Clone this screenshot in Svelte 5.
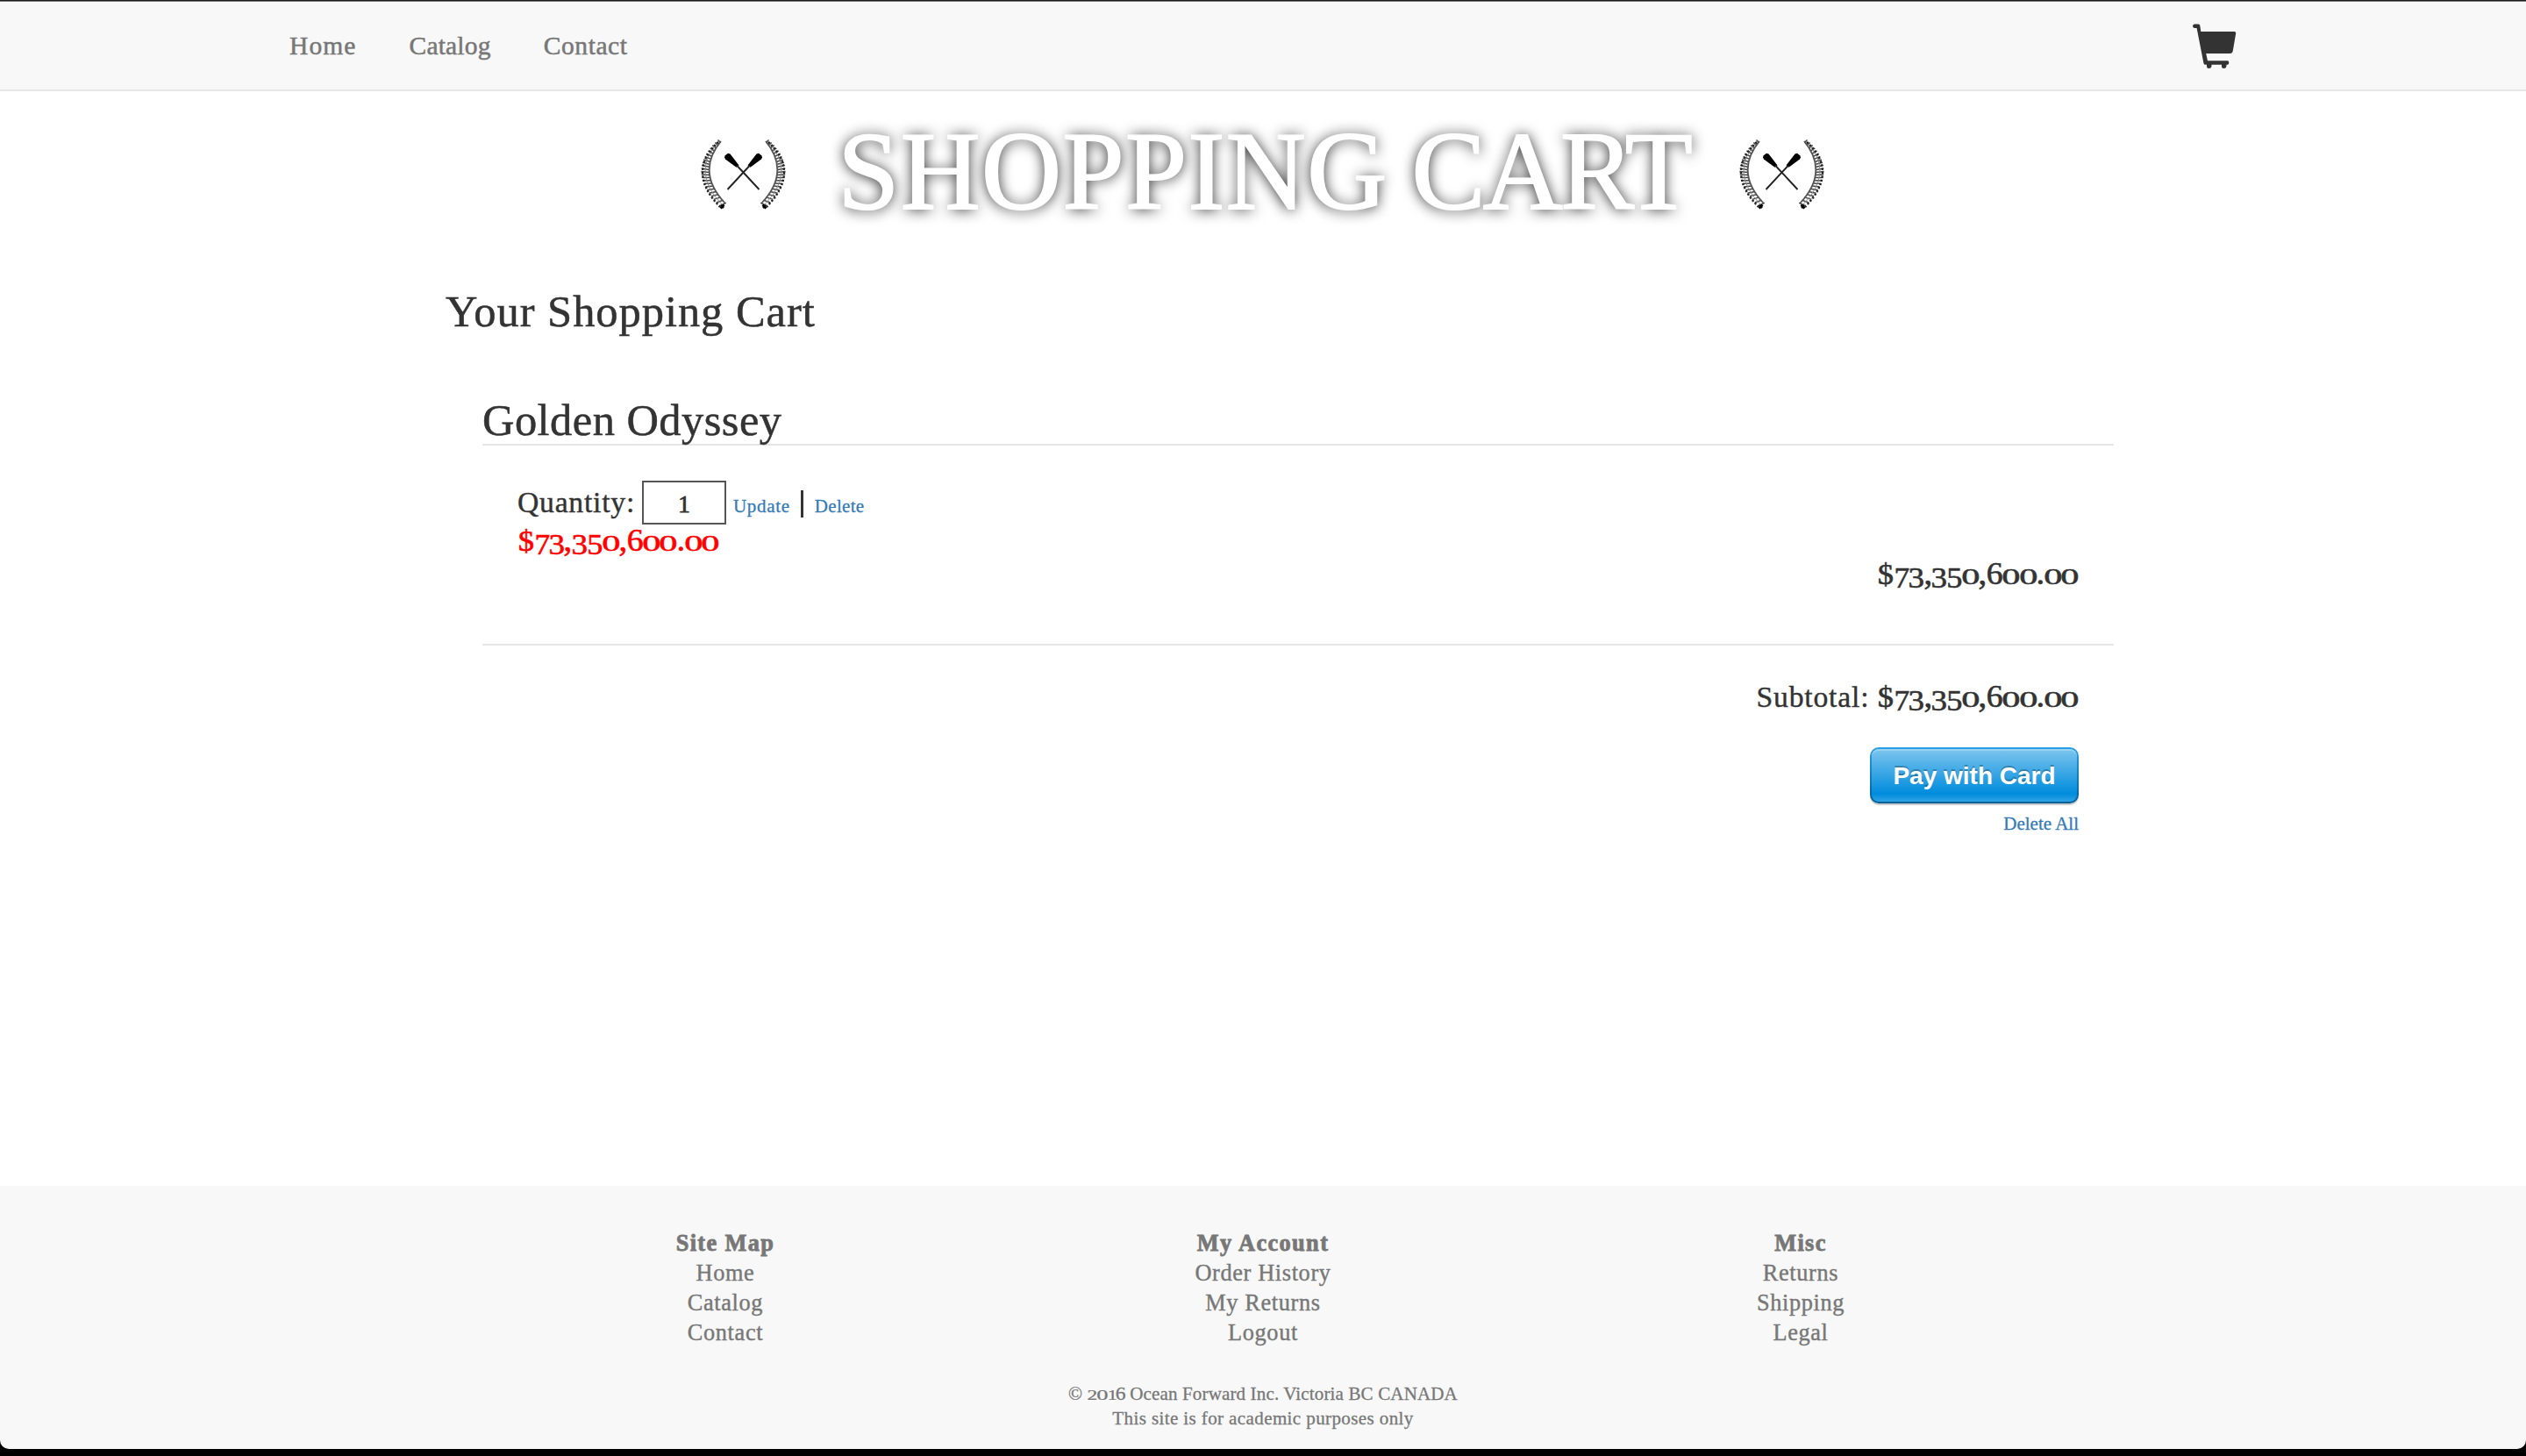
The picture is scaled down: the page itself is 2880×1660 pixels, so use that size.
<script>
  const navItems = [
    { label: 'Home', cls: 'w-home' },
    { label: 'Catalog', cls: 'w-catalog' },
    { label: 'Contact', cls: 'w-contact' }
  ];

  const columns = [
    { title: 'Site Map', links: ['Home', 'Catalog', 'Contact'] },
    { title: 'My Account', links: ['Order History', 'My Returns', 'Logout'] },
    { title: 'Misc', links: ['Returns', 'Shipping', 'Legal'] }
  ];

  // Leaves of the laurel branch, placed along a quadratic curve.
  function laurel() {
    const p0 = [22, 3], p1 = [-12, 37], p2 = [26, 75];
    const n = 22;
    let d = '';
    for (let i = 0; i <= n; i++) {
      const t = i / n;
      const u = 1 - t;
      const x = u * u * p0[0] + 2 * u * t * p1[0] + t * t * p2[0];
      const y = u * u * p0[1] + 2 * u * t * p1[1] + t * t * p2[1];
      const r = 1.6 + 3 * Math.min(1, t * 2);
      const a = -0.35 + 0.95 * t;
      const dx = r * Math.cos(a), dy = -r * Math.sin(a);
      d += `M${(x - dx).toFixed(1)} ${(y - dy - 1).toFixed(1)}L${(x + dx).toFixed(1)} ${(y + dy + 1).toFixed(1)}`;
    }
    return d;
  }
  const leaves = laurel();
</script>

{#snippet digits(value)}<span class="num">{#each value.split('') as ch}<span class="d d{ch === '$' ? 'dollar' : ch === ',' || ch === '.' ? 'sep' : ch}">{ch}</span>{/each}</span>{/snippet}

{#snippet branch()}
  <path class="leaf" d={leaves} />
  <path class="stem" d="M24 3Q-5 38 29 74" />
  <path class="stem mid" d="M22 3Q-12 38 26 76" />
  <path class="rim" d="M21 4Q-16 38 23 78" />
  <path class="tip" d="M24 76l3 3M23.500 79.500l4-4" />
{/snippet}

{#snippet wreath()}
  <svg class="wreath" viewBox="0 0 100 82" aria-hidden="true">
    <g>{@render branch()}</g>
    <g transform="translate(99 0) scale(-1 1)">{@render branch()}</g>
    <path d="M28 21.500L28.500 19.500L32 16.800L34.500 17.500L44.500 30.500L41.500 32.800L29 23.500Z" />
    <path d="M71 21.500L70.500 19.500L67 16.800L64.500 17.500L54.500 30.500L57.500 32.800L70 23.500Z" />
    <path class="shaft" d="M42 30.500L67.500 58M57 30.500L31.500 58" />
  </svg>
{/snippet}

<div class="page">
  <header class="navbar">
    <nav>
      {#each navItems as item}
        <a href="#top" class={item.cls}>{item.label}</a>
      {/each}
    </nav>
    <svg class="cart" viewBox="0 0 50 52" aria-label="Cart">
      <path d="M2 .5H6.500Q8 .5 8.300 2L9.300 9H47.500Q49.500 9 49.200 11L45.800 31Q45.200 34 42.500 34H15.200L17 42.300H40Q41.300 42.800 41.300 44.500T40 46.700H38.500V48.500Q38 51 35.500 51T33 48.500V46.700H21.500V48.500Q21 51 18.500 51T16 48.500V46.700H14Q12.800 46.500 12.500 45.200L4.600 5H2Q0 4.500 0 2.800T2 .5Z" />
    </svg>
  </header>

  <section class="banner">
    {@render wreath()}
    <h1><span class="first">SHOPPING</span> <span class="second">CART</span></h1>
    {@render wreath()}
  </section>

  <main>
    <h2>Your Shopping Cart</h2>
    <section class="item">
      <h3>Golden Odyssey</h3>
      <div class="details">
        <div class="qty">
          <label for="q">Quantity:</label>
          <input id="q" value="1" />
          <a class="update" href="#top">Update</a>
          <span class="bar"></span>
          <a class="delete" href="#top">Delete</a>
        </div>
        <div class="price">{@render digits('$73,350,600.00')}</div>
        <div class="total">{@render digits('$73,350,600.00')}</div>
      </div>
    </section>
    <section class="summary">
      <div class="subtotal"><span class="sub">Subtotal:</span>{@render digits('$73,350,600.00')}</div>
      <button><span>Pay with Card</span></button>
      <a class="clear" href="#top">Delete All</a>
    </section>
  </main>

  <div class="base">
    <footer>
      <div class="cols">
        {#each columns as col}
          <div class="col">
            <strong>{col.title}</strong>
            {#each col.links as link}
              <a href="#top">{link}</a>
            {/each}
          </div>
        {/each}
      </div>
      <p class="copy">© {@render digits('2016')} Ocean Forward Inc. Victoria BC CANADA</p>
      <p class="note">This site is for academic purposes only</p>
    </footer>
  </div>
</div>

<style>
  :global(body) { margin: 0; background: #fff; }
  .page {
    width: 2880px;
    height: 1660px;
    overflow: hidden;
    display: flex;
    flex-direction: column;
    font-family: 'Liberation Serif', Georgia, serif;
    color: #333;
  }
  h1, h2, h3, p { margin: 0; font-weight: 400; }
  a { color: #337ab7; text-decoration: none; }

  .navbar {
    box-sizing: border-box;
    height: 104px;
    padding: 0 330px;
    background: #f8f8f8;
    border-top: 1px solid #1c1a1b;
    border-bottom: 2px solid #e7e7e7;
    box-shadow: inset 0 1px #777;
    display: flex;
    justify-content: space-between;
    align-items: center;
  }
  nav { display: flex; gap: 60px; font-size: 29.5px; line-height: 40px; }
  nav a { color: #777; -webkit-text-stroke: 0.5px #777; }
  .w-home { letter-spacing: 1.1px; }
  .w-catalog { letter-spacing: 0.2px; }
  .w-contact { letter-spacing: 0.6px; }
  .cart { width: 50px; height: 52px; fill: #333; margin-top: 2px; }

  .banner {
    display: flex;
    justify-content: center;
    align-items: center;
    gap: 57px;
    padding-top: 22px;
  }
  h1 {
    display: flex;
    gap: 27px;
    font-size: 126px;
    line-height: 139px;
    color: #fff;
    -webkit-text-stroke: 2px #fff;
    text-shadow: 0 1px 16px rgba(0, 0, 0, 0.95);
  }
  .first { letter-spacing: 1.4px; }
  .second { letter-spacing: -2.8px; margin-right: -2px; }
  .wreath { width: 100px; height: 82px; margin-top: 7px; }
  .leaf { fill: none; stroke: #444; stroke-width: 1.5; }
  .stem { fill: none; stroke: #555; stroke-width: 1.8; }
  .mid { stroke: #888; stroke-width: 1; }
  .rim { fill: none; stroke: #222; stroke-width: 2.4; stroke-dasharray: 2.2 2.2; }
  .tip { fill: none; stroke: #000; stroke-width: 2.6; }
  .shaft { fill: none; stroke: #222; stroke-width: 1.9; }

  main { flex: 1; padding: 60px 470px 0 508px; }
  h2, h3 { -webkit-text-stroke: 0.5px #333; }
  h2 { font-size: 50.5px; line-height: 60px; letter-spacing: 0.95px; }
  .item {
    margin: 67px 0 0 42px;
    border-bottom: 2px solid #e5e5e5;
  }
  h3 {
    font-size: 50.5px;
    line-height: 54px;
    letter-spacing: 0.45px;
    border-bottom: 2px solid #e5e5e5;
  }
  .details { padding: 40px 40px 60px; }
  .qty {
    display: flex;
    align-items: baseline;
    height: 50px;
    font-size: 33.7px;
    line-height: 38px;
  }
  .qty label { width: 142px; letter-spacing: 0.75px; -webkit-text-stroke: 0.4px #333; }
  input {
    box-sizing: border-box;
    width: 96px;
    height: 50px;
    padding: 4px 0 0;
    border: 2px solid #555;
    background: #fff;
    color: #333;
    font: 27px 'Liberation Serif', Georgia, serif;
    -webkit-text-stroke: 0.9px #333;
    text-align: center;
  }
  .update, .delete, .clear { font-size: 21px; -webkit-text-stroke: 0.3px #337ab7; }
  .update { margin-left: 8px; letter-spacing: 0.7px; }
  .bar { width: 3px; height: 31px; margin: 0 13px 0 12px; background: #333; transform: translateY(6px); }
  .delete { letter-spacing: 0.3px; }

  .num { display: inline-flex; line-height: 1; align-items: baseline; }
  .d { display: inline-block; text-align: center; line-height: 1; width: 0.58em; transform-origin: 50% 0.84em; }
  .ddollar { width: 0.58em; transform: scaleX(1.08); }
  .dsep { width: 0.257em; transform: scale(1.15); }
  .d0 { transform: scale(1.26, 0.77); }
  .d1 { width: 0.41em; transform: scale(1.05, 0.75); }
  .d2 { width: 0.53em; transform: scale(1.12, 0.75); }
  .d3 { width: 0.524em; transform: translateY(0.13em) scaleX(1.1); }
  .d5 { width: 0.502em; transform: translateY(0.13em) scaleX(1.08); }
  .d6 { width: 0.54em; transform: scale(1.12, 1.04); }
  .d7 { width: 0.478em; transform: translateY(0.13em) scaleX(1.05); }

  .price, .total, .subtotal {
    font-size: 33.7px;
    line-height: 38px;
    height: 38px;
    -webkit-text-stroke: 0.6px currentColor;
  }
  .price { color: #f00; }
  .total { text-align: right; }
  .summary {
    padding: 40px 40px 0 0;
    display: flex;
    flex-direction: column;
    align-items: flex-end;
  }
  .subtotal { display: flex; align-items: baseline; }
  .sub { letter-spacing: 0.8px; margin-right: 9px; -webkit-text-stroke: 0.4px #333; }
  button {
    width: 238px;
    height: 64px;
    margin: 38px 0 8px;
    padding: 2px;
    border: 0;
    border-radius: 10px;
    background: linear-gradient(#28a0e5, #015e94);
    box-shadow: 0 2px 0 rgba(0, 0, 0, 0.2);
  }
  button span {
    display: block;
    height: 60px;
    border-radius: 8px;
    background: linear-gradient(#7dc5ee, #008cdd 85%, #30a2e4);
    box-shadow: inset 0 2px 0 rgba(255, 255, 255, 0.25);
    color: #fff;
    font: bold 28px/61px 'Liberation Sans', Helvetica, sans-serif;
    text-shadow: 0 -2px 0 rgba(0, 0, 0, 0.25);
  }
  .clear { line-height: 30px; }

  .base { background: #000; height: 308px; }
  footer {
    box-sizing: border-box;
    height: 300px;
    padding-top: 49px;
    background: #f8f8f8;
    border-radius: 0 0 10px 10px;
    color: #777;
    text-align: center;
  }
  .cols {
    display: grid;
    grid-template-columns: repeat(3, 613px);
    justify-content: center;
    font-size: 26.3px;
    line-height: 34px;
    -webkit-text-stroke: 0.4px #777;
  }
  .col { display: flex; flex-direction: column; }
  .col a { color: #777; letter-spacing: 0.65px; }
  .col strong { letter-spacing: 1.4px; -webkit-text-stroke: 0.8px #777; }
  .copy { margin-top: 38px; }
  .copy, .note { font-size: 21px; line-height: 28px; -webkit-text-stroke: 0.3px #777; }
  .copy { letter-spacing: 0.15px; }
  .note { letter-spacing: 0.4px; }
</style>
